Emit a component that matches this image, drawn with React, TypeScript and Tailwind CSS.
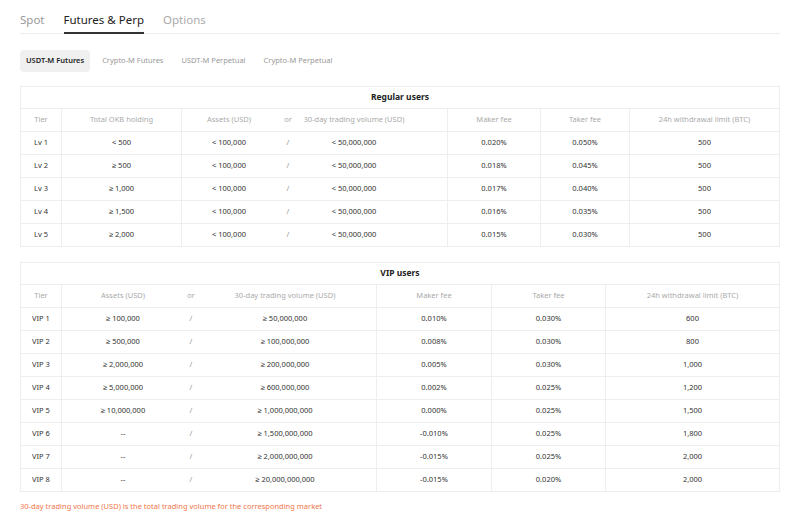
const regular = [
  ["Lv 1", "< 500", "< 100,000", "< 50,000,000", "0.020%", "0.050%", "500"],
  ["Lv 2", "≥ 500", "< 100,000", "< 50,000,000", "0.018%", "0.045%", "500"],
  ["Lv 3", "≥ 1,000", "< 100,000", "< 50,000,000", "0.017%", "0.040%", "500"],
  ["Lv 4", "≥ 1,500", "< 100,000", "< 50,000,000", "0.016%", "0.035%", "500"],
  ["Lv 5", "≥ 2,000", "< 100,000", "< 50,000,000", "0.015%", "0.030%", "500"],
]

const vip = [
  ["VIP 1", "≥ 100,000", "≥ 50,000,000", "0.010%", "0.030%", "600"],
  ["VIP 2", "≥ 500,000", "≥ 100,000,000", "0.008%", "0.030%", "800"],
  ["VIP 3", "≥ 2,000,000", "≥ 200,000,000", "0.005%", "0.030%", "1,000"],
  ["VIP 4", "≥ 5,000,000", "≥ 600,000,000", "0.002%", "0.025%", "1,200"],
  ["VIP 5", "≥ 10,000,000", "≥ 1,000,000,000", "0.000%", "0.025%", "1,500"],
  ["VIP 6", "--", "≥ 1,500,000,000", "-0.010%", "0.025%", "1,800"],
  ["VIP 7", "--", "≥ 2,000,000,000", "-0.015%", "0.025%", "2,000"],
  ["VIP 8", "--", "≥ 20,000,000,000", "-0.015%", "0.020%", "2,000"],
]

const cell = "h-[22px] flex items-center justify-center border-r border-[#eeeeee] last:border-r-0"

export default function App() {
  return (
    <div className="w-[800px] h-[522px] bg-white px-5 pt-[11px] text-[#333] font-['Lato','Noto_Sans',sans-serif]">
      <div className="flex gap-[19px] border-b border-[#eeeeee] text-[11.5px] h-[23px]">
        <div className="text-[#999]">Spot</div>
        <div className="text-[#222] border-b-2 border-[#333] h-[23px]">Futures &amp; Perp</div>
        <div className="text-[#aaa]">Options</div>
      </div>
      <div className="flex mt-4 text-[7.5px] text-[#999] h-[22px] items-stretch">
        <div className="bg-[#f0f0f0] text-[#222] font-semibold px-[6px] flex items-center rounded-sm">USDT-M Futures</div>
        <div className="px-3 flex items-center">Crypto-M Futures</div>
        <div className="px-[6px] flex items-center">USDT-M Perpetual</div>
        <div className="px-3 flex items-center">Crypto-M Perpetual</div>
      </div>

      <div className="mt-[14px] border border-[#eeeeee] text-[7.5px]">
        <div className="h-[22px] flex items-center justify-center font-bold text-[8.5px] text-[#222] border-b border-[#eeeeee]">Regular users</div>
        <div className="grid grid-cols-[41px_120px_266px_93px_89px_1fr] text-[#aaa] border-b border-[#eeeeee]">
          <div className={cell}>Tier</div>
          <div className={cell}>Total OKB holding</div>
          <div className={cell + " !justify-start"}>
            <span className="w-[94px] text-center">Assets (USD)</span>
            <span className="w-[24px] text-center">or</span>
            <span className="w-[108px] text-center whitespace-nowrap">30-day trading volume (USD)</span>
          </div>
          <div className={cell}>Maker fee</div>
          <div className={cell}>Taker fee</div>
          <div className={cell}>24h withdrawal limit (BTC)</div>
        </div>
        {regular.map((r, i) => (
          <div key={i} className="grid grid-cols-[41px_120px_266px_93px_89px_1fr] border-b border-[#eeeeee] last:border-b-0">
            <div className={cell}>{r[0]}</div>
            <div className={cell}>{r[1]}</div>
            <div className={cell + " !justify-start"}>
              <span className="w-[94px] text-center">{r[2]}</span>
              <span className="w-[24px] text-center text-[#999]">/</span>
              <span className="w-[108px] text-center">{r[3]}</span>
            </div>
            <div className={cell}>{r[4]}</div>
            <div className={cell}>{r[5]}</div>
            <div className={cell}>{r[6]}</div>
          </div>
        ))}
      </div>

      <div className="mt-[15px] border border-[#eeeeee] text-[7.5px]">
        <div className="h-[22px] flex items-center justify-center font-bold text-[8.5px] text-[#222] border-b border-[#eeeeee]">VIP users</div>
        <div className="grid grid-cols-[41px_315px_115px_114px_1fr] text-[#aaa] border-b border-[#eeeeee]">
          <div className={cell}>Tier</div>
          <div className={cell + " !justify-start"}>
            <span className="w-[122px] text-center">Assets (USD)</span>
            <span className="w-[14px] text-center">or</span>
            <span className="w-[174px] text-center">30-day trading volume (USD)</span>
          </div>
          <div className={cell}>Maker fee</div>
          <div className={cell}>Taker fee</div>
          <div className={cell}>24h withdrawal limit (BTC)</div>
        </div>
        {vip.map((r, i) => (
          <div key={i} className="grid grid-cols-[41px_315px_115px_114px_1fr] border-b border-[#eeeeee] last:border-b-0">
            <div className={cell}>{r[0]}</div>
            <div className={cell + " !justify-start"}>
              <span className="w-[122px] text-center">{r[1]}</span>
              <span className="w-[14px] text-center text-[#999]">/</span>
              <span className="w-[174px] text-center">{r[2]}</span>
            </div>
            <div className={cell}>{r[3]}</div>
            <div className={cell}>{r[4]}</div>
            <div className={cell}>{r[5]}</div>
          </div>
        ))}
      </div>

      <div className="mt-[9px] text-[7.5px] text-[#f0764a]">30-day trading volume (USD) is the total trading volume for the corresponding market</div>
    </div>
  )
}
